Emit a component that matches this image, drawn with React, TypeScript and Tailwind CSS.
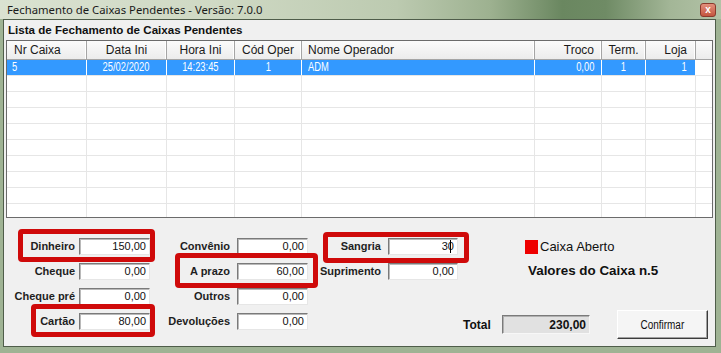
import React from "react";

const cols = [
  { w: "w-[80px]", label: "Nr Caixa", h: "text-left pl-[7px]", d: "text-left pl-[5px]", o: "origin-left", v: "5" },
  { w: "w-[80px]", label: "Data Ini", h: "text-center", d: "text-center", o: "origin-center", v: "25/02/2020" },
  { w: "w-[68px]", label: "Hora Ini", h: "text-center", d: "text-center", o: "origin-center", v: "14:23:45" },
  { w: "w-[67px]", label: "Cód Oper", h: "text-center", d: "text-center", o: "origin-center", v: "1" },
  { w: "w-[233px]", label: "Nome Operador", h: "text-left pl-[6px]", d: "text-left pl-[6px]", o: "origin-left", v: "ADM" },
  { w: "w-[67px]", label: "Troco", h: "text-right pr-[7px]", d: "text-right pr-[7px]", o: "origin-right", v: "0,00" },
  { w: "w-[44px]", label: "Term.", h: "text-center", d: "text-center", o: "origin-center", v: "1" },
  { w: "w-[50px]", label: "Loja", h: "text-right pr-[8px]", d: "text-right pr-[8px]", o: "origin-right", v: "1" },
];

const emptyRows = [1, 2, 3, 4, 5, 6, 7, 8, 9];

function Edit({ value, w, cursor }: { value: string; w: string; cursor?: boolean }) {
  return (
    <div
      className={`${w} h-[17px] bg-white border border-t-[#7a7a7a] border-l-[#7a7a7a] border-r-[#e6e6e6] border-b-[#e6e6e6] shadow-[inset_1px_1px_0_#b9b9b9] flex items-center justify-end pr-[3px] text-[11px] text-[#111]`}
    >
      {value}
      {cursor && <span className="inline-block w-px h-[13px] bg-black -ml-[4px] mr-[3px]" />}
    </div>
  );
}

function Row({ label, children, lw, gap }: { label: string; children: React.ReactNode; lw: string; gap: string }) {
  return (
    <div className={`h-[25px] flex items-center ${gap}`}>
      <div className={`${lw} text-right text-[11px] font-bold text-[#1e1e1e] whitespace-nowrap`}>{label}</div>
      {children}
    </div>
  );
}

export default function App() {
  return (
    <div className="relative w-[721px] h-[353px] overflow-hidden bg-[#9fb394] flex flex-col font-['Liberation_Sans',Arial,sans-serif]">
      {/* title bar */}
      <div className="h-[19px] shrink-0 flex items-center justify-between pl-[7px] pr-[5px] bg-[linear-gradient(to_right,#dae2d1_0%,#cfd9c4_30%,#bccab0_55%,#9db190_68%,#6a8760_78%,#6f8b65_84%,#a3b697_93%,#b3c3a7_100%)]">
        <span className="text-[11.3px] text-[#1a1a1a] font-['Noto_Sans',sans-serif] leading-none">
          Fechamento de Caixas Pendentes - Versão: 7.0.0
        </span>
        <div className="w-[16px] h-[14px] rounded-[3px] border border-[#8a3a2c] bg-[linear-gradient(to_bottom,#e3907c,#c4553f)] flex items-center justify-center text-white text-[10px] font-bold leading-none">
          x
        </div>
      </div>

      {/* client area */}
      <div className="flex-1 ml-[3px] mr-[5px] mb-[6px] border border-[#4f5d4a] bg-[#f0f0f0] flex flex-col">
        <div className="h-[20px] flex items-center pl-[4px] text-[11.6px] font-bold text-[#111]">
          Lista de Fechamento de Caixas Pendentes
        </div>

        {/* grid */}
        <div className="ml-[2px] w-[707px] h-[178px] border border-[#6b6b6b] bg-white overflow-hidden flex flex-col">
          <div className="h-[19px] shrink-0 flex bg-[linear-gradient(to_bottom,#fbfbfb,#ececec)] border-b border-[#a5a5a5]">
            {cols.map((c) => (
              <div
                key={c.label}
                className={`${c.w} ${c.h} shrink-0 border-r border-[#a5a5a5] shadow-[inset_-1px_0_0_#ffffff] text-[12px] leading-[18px] text-[#1a1a1a] whitespace-nowrap`}
              >
                {c.label}
              </div>
            ))}
            <div className="flex-1" />
          </div>

          <div className="h-[16px] shrink-0 flex border-b border-[#e6e6e6]">
            {cols.map((c) => (
              <div
                key={c.label}
                className={`${c.w} ${c.d} shrink-0 bg-[#3399ff] border-r border-white text-[12px] leading-[15px] text-white whitespace-nowrap`}
              >
                <span className={`inline-block scale-x-[0.78] ${c.o}`}>{c.v}</span>
              </div>
            ))}
            <div className="flex-1" />
          </div>

          {emptyRows.map((r) => (
            <div key={r} className="h-[16px] shrink-0 flex border-b border-[#e6e6e6]">
              {cols.map((c) => (
                <div key={c.label} className={`${c.w} shrink-0 border-r border-[#e6e6e6]`} />
              ))}
              <div className="flex-1" />
            </div>
          ))}
        </div>

        {/* form */}
        <div className="mt-[16px] flex">
          <div className="flex flex-col">
            <Row label="Dinheiro" lw="w-[71px]" gap="gap-[4px]"><Edit value="150,00" w="w-[71px]" /></Row>
            <Row label="Cheque" lw="w-[71px]" gap="gap-[4px]"><Edit value="0,00" w="w-[71px]" /></Row>
            <Row label="Cheque pré" lw="w-[71px]" gap="gap-[4px]"><Edit value="0,00" w="w-[71px]" /></Row>
            <Row label="Cartão" lw="w-[71px]" gap="gap-[4px]"><Edit value="80,00" w="w-[71px]" /></Row>
          </div>
          <div className="flex flex-col">
            <Row label="Convênio" lw="w-[80px]" gap="gap-[7px]"><Edit value="0,00" w="w-[71px]" /></Row>
            <Row label="A prazo" lw="w-[80px]" gap="gap-[7px]"><Edit value="60,00" w="w-[71px]" /></Row>
            <Row label="Outros" lw="w-[80px]" gap="gap-[7px]"><Edit value="0,00" w="w-[71px]" /></Row>
            <Row label="Devoluções" lw="w-[80px]" gap="gap-[7px]"><Edit value="0,00" w="w-[71px]" /></Row>
          </div>
          <div className="flex flex-col">
            <Row label="Sangria" lw="w-[73px]" gap="gap-[7px]"><Edit value="30" w="w-[70px]" cursor /></Row>
            <Row label="Suprimento" lw="w-[73px]" gap="gap-[7px]"><Edit value="0,00" w="w-[70px]" /></Row>
          </div>
          <div className="flex-1 flex flex-col">
            <div className="h-[25px] flex items-center pl-[67px] gap-[2px]">
              <span className="w-[13px] h-[14px] bg-[#ee0000]" />
              <span className="text-[13px] text-[#111]">Caixa Aberto</span>
            </div>
            <div className="h-[25px] flex items-center pl-[70px] text-[13.4px] font-bold text-[#111]">
              Valores do Caixa n.5
            </div>
            <div className="pt-[26px] flex items-center pl-[5px]">
              <span className="text-[12px] font-bold text-[#111] w-[39px]">Total</span>
              <div className="w-[88px] h-[19px] bg-[#e1e1e1] border border-t-[#7a7a7a] border-l-[#7a7a7a] border-r-[#f7f7f7] border-b-[#f7f7f7] shadow-[inset_1px_1px_0_#b0b0b0] flex items-center justify-end pr-[3px] text-[12px] font-bold text-[#111]">
                230,00
              </div>
              <div className="ml-[27px] w-[91px] h-[29px] bg-[#f5f5f5] border border-t-white border-l-white border-r-[#3c3c3c] border-b-[#3c3c3c] shadow-[inset_-1px_-1px_0_#a0a0a0] flex items-center justify-center text-[12px] text-[#111]">
                <span className="inline-block scale-x-[0.83]">Confirmar</span>
              </div>
            </div>
          </div>
        </div>
      </div>

      {/* red annotation boxes */}
      <div className="absolute left-[18px] top-[229px] w-[137px] h-[33px] border-[5px] border-[#cf0a0a] rounded-[4px]" />
      <div className="absolute left-[31px] top-[304px] w-[124px] h-[33px] border-[5px] border-[#cf0a0a] rounded-[4px]" />
      <div className="absolute left-[175px] top-[253px] w-[143px] h-[35px] border-[5px] border-[#cf0a0a] rounded-[4px]" />
      <div className="absolute left-[323px] top-[232px] w-[146px] h-[31px] border-[5px] border-[#cf0a0a] rounded-[4px]" />
    </div>
  );
}
